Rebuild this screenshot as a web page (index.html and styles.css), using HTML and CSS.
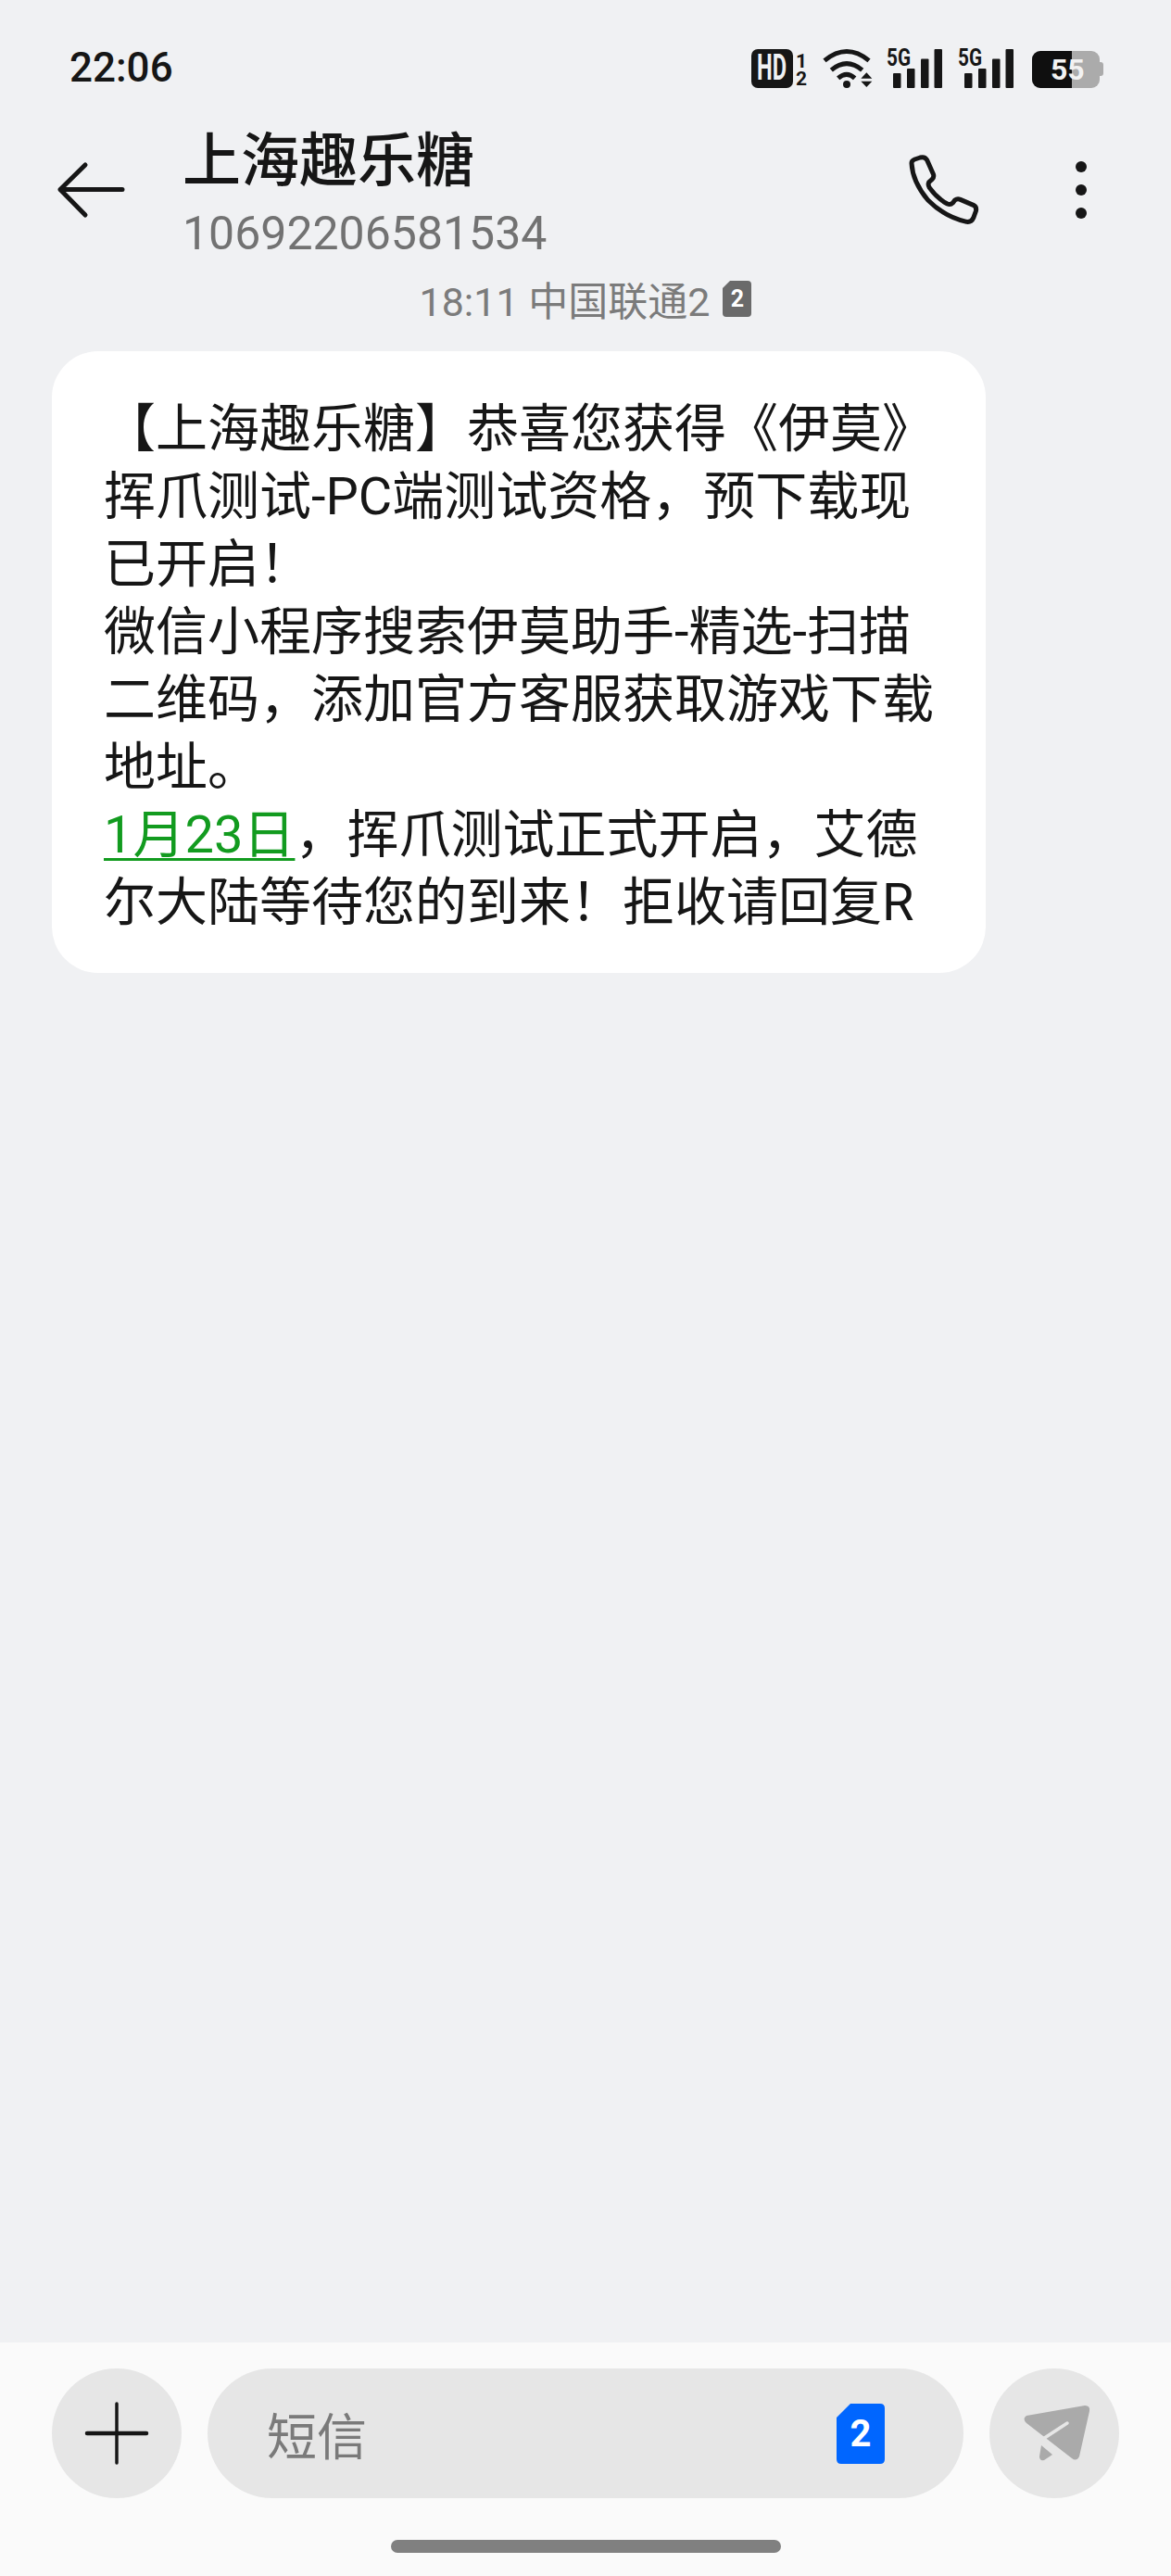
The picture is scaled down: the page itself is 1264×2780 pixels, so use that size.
FILE: index.html
```html
<!DOCTYPE html>
<html lang="zh-CN">
<head>
    <meta charset="UTF-8">
    <meta name="viewport" content="width=device-width, initial-scale=1.0">
    <title>上海趣乐糖</title>
    <link rel="stylesheet" href="styles.css">
</head>
<body>
    <div class="screen">
        <div class="status-bar">
            <span class="clock">22:06</span>
            <div class="status-icons">
                <svg class="icon-hd" viewBox="0 0 60 42">
                    <rect x="0" y="0" width="45" height="42" rx="7" fill="#161616"/>
                    <text x="6" y="33" class="hd-text" textLength="32" lengthAdjust="spacingAndGlyphs">HD</text>
                    <text x="54" y="20" class="sim-digit">1</text>
                    <text x="54" y="39" class="sim-digit">2</text>
                </svg>
                <svg class="icon-wifi" viewBox="264 36 164 126">
                    <g fill="none" stroke="#161616" stroke-width="15">
                        <path d="M270 73Q342 14 414 73"/>
                        <path d="M292 104Q342 62 392 104"/>
                        <path d="M314 130Q342 106 368 130"/>
                    </g>
                    <circle cx="342" cy="150" r="12" fill="#161616"/>
                    <path d="M388 131H424L406 112ZM388 140H424L406 159Z" fill="#161616"/>
                </svg>
                <svg class="icon-signal" viewBox="0 0 60 42">
                    <text x="0" y="18" class="net-text" textLength="26" lengthAdjust="spacingAndGlyphs">5G</text>
                    <rect x="7" y="26" width="8.5" height="16" rx="1"/>
                    <rect x="22" y="21" width="8.5" height="21" rx="1"/>
                    <rect x="37" y="10.500" width="8.5" height="31.500" rx="1"/>
                    <rect x="51.500" y="0" width="8.5" height="42" rx="1"/>
                </svg>
                <svg class="icon-signal" viewBox="0 0 60 42">
                    <text x="0" y="18" class="net-text" textLength="26" lengthAdjust="spacingAndGlyphs">5G</text>
                    <rect x="7" y="26" width="8.5" height="16" rx="1"/>
                    <rect x="22" y="21" width="8.5" height="21" rx="1"/>
                    <rect x="37" y="10.500" width="8.5" height="31.500" rx="1"/>
                    <rect x="51.500" y="0" width="8.5" height="42" rx="1"/>
                </svg>
                <div class="battery">
                    <div class="battery-fill"></div>
                    <span class="battery-text">55</span>
                    <div class="battery-nub"></div>
                </div>
            </div>
        </div>

        <div class="top-bar">
            <svg class="icon-back" viewBox="0 0 72 60">
                <path d="M70 29.500H3M30 3L3 29.500L30 57" fill="none" stroke="#161616" stroke-width="5" stroke-linecap="round" stroke-linejoin="round"/>
            </svg>
            <div class="contact">
                <div class="contact-name">上海趣乐糖</div>
                <div class="contact-number">10692206581534</div>
            </div>
            <svg class="icon-phone" viewBox="597 440 236 232">
                <path d="M612 470Q612 462 622 458L640 452Q655 448 662 460L682 505Q686 515 678 523L668 532Q664 540 670 550Q695 585 728 602Q738 606 746 598L752 590Q760 584 770 588L812 606Q824 612 820 626L812 648Q806 662 790 660Q720 645 665 590Q615 530 612 470Z" fill="none" stroke="#161616" stroke-width="15" stroke-linejoin="round"/>
            </svg>
            <div class="more-dots">
                <span></span>
                <span></span>
                <span></span>
            </div>
        </div>

        <div class="thread">
            <div class="msg-time">
                <span>18:11 中国联通2</span>
                <svg class="icon-sim-small" viewBox="0 0 31 39">
                    <path d="M8 0H27Q31 0 31 4V35Q31 39 27 39H4Q0 39 0 35V8Z" fill="#6a6a6a"/>
                    <text x="16" y="28" class="sim-small-text">2</text>
                </svg>
            </div>
            <div class="bubble">
                【上海趣乐糖】恭喜您获得《伊莫》<br>
                挥爪测试-PC端测试资格，预下载现<br>
                已开启！<br>
                微信小程序搜索伊莫助手-精选-扫描<br>
                二维码，添加官方客服获取游戏下载<br>
                地址。<br>
                <a class="date-link" href="#">1月23日</a>，挥爪测试正式开启，艾德<br>
                尔大陆等待您的到来！拒收请回复R
            </div>
        </div>

        <div class="composer">
            <div class="composer-row">
                <div class="round-btn">
                    <svg class="icon-plus" viewBox="0 0 66 66">
                        <path d="M33 1V65" stroke="#161616" stroke-width="3.500" stroke-linecap="round"/>
                        <path d="M1 33H65" stroke="#161616" stroke-width="4.500" stroke-linecap="round"/>
                    </svg>
                </div>
                <div class="sms-input">
                    <span class="sms-placeholder">短信</span>
                    <svg class="icon-sim" viewBox="0 0 52 65">
                        <path d="M15 0H47Q52 0 52 5V60Q52 65 47 65H5Q0 65 0 60V15Z" fill="#0066ff"/>
                        <text x="26" y="46" class="sim-text">2</text>
                    </svg>
                </div>
                <div class="round-btn">
                    <svg class="icon-send" viewBox="0 0 72 60">
                        <path d="M3 11L66 0Q72 0 71 6L60 55Q57 61 52 57L3 19Q-2 14 3 11Z" fill="#aaaaaa"/>
                        <path d="M19 43L31 53L22 59Q17 60 17 55Z" fill="#aaaaaa"/>
                        <path d="M47 19L21 36L35 47" fill="none" stroke="#e6e6e6" stroke-width="3.500" stroke-linecap="round"/>
                    </svg>
                </div>
            </div>
            <div class="home-bar"></div>
        </div>
    </div>
</body>
</html>
```

FILE: styles.css
```css
* {
    box-sizing: border-box;
}
body {
    margin: 0;
    font-family: Roboto, 'Noto Sans CJK SC', sans-serif;
    background-color: #f0f1f3;
    color: #161616;
}
svg {
    overflow: visible;
}
.screen {
    display: flex;
    flex-direction: column;
    height: 2780px;
    overflow: hidden;
}

/* status bar */
.status-bar {
    display: flex;
    align-items: center;
    justify-content: space-between;
    height: 43px;
    margin-top: 52px;
    padding: 0 73px 0 75px;
}
.clock {
    font-size: 44px;
    font-weight: 500;
    line-height: 43px;
}
.status-icons {
    display: flex;
    align-items: flex-start;
}
.icon-hd {
    width: 60px;
    height: 42px;
    margin-right: 17px;
}
.hd-text {
    font-size: 39px;
    font-weight: 700;
    fill: #f0f1f3;
}
.sim-digit {
    font-size: 21px;
    font-weight: 700;
    fill: #161616;
    text-anchor: middle;
}
.icon-wifi {
    width: 54.67px;
    height: 42px;
    margin-right: 14px;
}
.icon-signal {
    width: 60px;
    height: 42px;
    margin-right: 17px;
    fill: #161616;
}
.net-text {
    font-size: 25px;
    font-weight: 700;
}
.battery {
    position: relative;
    width: 73px;
    height: 40px;
    margin: 2px 4px 0 3px;
    border-radius: 9px;
    background: #ababab;
}
.battery-fill {
    width: 43px;
    height: 100%;
    border-radius: 9px 0 0 9px;
    background: #0f0f0f;
}
.battery-text {
    position: absolute;
    left: 20px;
    top: 0;
    font-size: 32px;
    font-weight: 700;
    line-height: 40px;
    color: #f2f2f2;
}
.battery-nub {
    position: absolute;
    right: -4px;
    top: 12px;
    width: 4px;
    height: 15px;
    border-radius: 0 3px 3px 0;
    background: #ababab;
}

/* title bar */
.top-bar {
    display: flex;
    align-items: flex-start;
    height: 188px;
    padding-left: 62px;
}
.icon-back {
    width: 72px;
    height: 60px;
    margin-top: 80px;
}
.contact {
    width: 782px;
    margin-left: 63px;
    padding-top: 39px;
}
.contact-name {
    font-size: 63px;
    font-weight: 500;
    line-height: 80px;
}
.contact-number {
    margin-top: 8px;
    font-size: 50px;
    line-height: 60px;
    color: #727272;
}
.icon-phone {
    width: 78.67px;
    height: 77.33px;
    margin-top: 71px;
}
.more-dots {
    display: flex;
    flex-direction: column;
    gap: 13px;
    margin: 79px 0 0 103px;
}
.more-dots span {
    width: 12px;
    height: 12px;
    border-radius: 50%;
    background: #161616;
}

/* messages */
.thread {
    flex: 1;
    padding: 0 56px;
}
.msg-time {
    display: flex;
    align-items: center;
    justify-content: center;
    gap: 14px;
    width: 1152px;
    height: 78px;
    margin-bottom: 18px;
    font-size: 43px;
    color: #7b7b7b;
}
.icon-sim-small {
    width: 31px;
    height: 39px;
}
.sim-small-text {
    font-size: 25px;
    font-weight: 700;
    fill: #fff;
    text-anchor: middle;
}
.bubble {
    width: 1008px;
    padding: 48px 40px 39px 56px;
    border-radius: 50px;
    background: #fff;
    font-size: 56px;
    line-height: 73px;
    white-space: nowrap;
}
.date-link {
    color: #129b1f;
    text-decoration: underline;
    text-decoration-thickness: 3px;
    text-underline-offset: 6px;
}

/* bottom input */
.composer {
    height: 252px;
    padding: 28px 56px 0;
    background: #fafafa;
}
.composer-row {
    display: flex;
    gap: 28px;
}
.round-btn {
    display: flex;
    align-items: center;
    justify-content: center;
    flex: none;
    width: 140px;
    height: 140px;
    border-radius: 50%;
    background: #e6e6e6;
}
.icon-plus {
    width: 66px;
    height: 66px;
}
.icon-send {
    width: 72px;
    height: 60px;
    margin-left: 6px;
}
.sms-input {
    display: flex;
    align-items: center;
    justify-content: space-between;
    flex: 1;
    height: 140px;
    padding: 0 85px 0 64px;
    border-radius: 70px;
    background: #e6e6e6;
}
.sms-placeholder {
    font-size: 54px;
    color: #7a7a7a;
}
.icon-sim {
    width: 52px;
    height: 65px;
}
.sim-text {
    font-size: 40px;
    font-weight: 700;
    fill: #fff;
    text-anchor: middle;
}
.home-bar {
    width: 421px;
    height: 14px;
    margin: 45px auto 0;
    border-radius: 7px;
    background: #808080;
}
```
